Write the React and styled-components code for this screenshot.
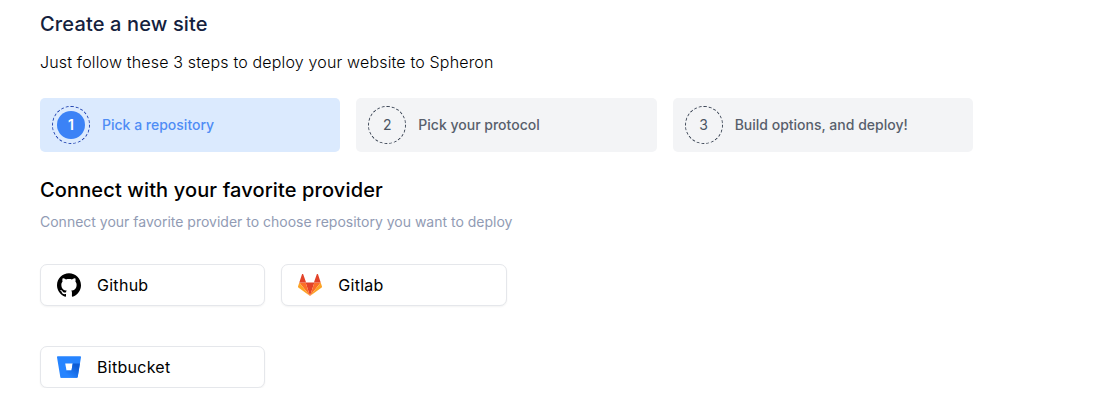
import React from "react";
import styled, { createGlobalStyle } from "styled-components";
import { SiGithub } from "react-icons/si";

const GlobalStyle = createGlobalStyle`
  * { box-sizing: border-box; }
  body { margin: 0; background: #fff; font-family: Inter, "Liberation Sans", sans-serif; }
  h1, h2, p { margin: 0; }
`;

const Page = styled.main`
  padding: 9px 0 0 40px;
`;

const Title = styled.h1`
  font-size: 20px;
  line-height: 30px;
  font-weight: 500;
  letter-spacing: 0.14px;
  color: #14213d;
`;

const Intro = styled.p`
  margin-top: 11px;
  font-size: 16px;
  line-height: 24px;
  font-weight: 300;
  letter-spacing: 0.165px;
  color: #000;
`;

const Steps = styled.ol`
  display: grid;
  grid-template-columns: repeat(3, 300.33px);
  gap: 16px;
  margin: 24px 0 0;
  padding: 0;
  list-style: none;
`;

const Step = styled.li`
  display: flex;
  align-items: center;
  gap: 12px;
  height: 54px;
  padding: 0 12px;
  border-radius: 5px;
  background: ${(p) => (p.$active ? "#dbeafe" : "#f3f4f6")};
  color: ${(p) => (p.$active ? "#4f8df5" : "#585f6c")};
  font-size: 14px;
  line-height: 20px;
  font-weight: 500;
`;

const Ring = styled.span`
  display: flex;
  width: 38px;
  height: 38px;
  padding: 4px;
  border: 1px dashed ${(p) => (p.$active ? "#1e40af" : "#374151")};
  border-radius: 50%;
`;

const StepNumber = styled.span`
  flex: 1;
  display: flex;
  align-items: center;
  justify-content: center;
  border-radius: 50%;
  background: ${(p) => (p.$active ? "#3b82f6" : "transparent")};
  color: ${(p) => (p.$active ? "#fff" : "#4b5563")};
  font-weight: ${(p) => (p.$active ? 600 : 400)};
`;

const Heading = styled.h2`
  margin-top: 23px;
  font-size: 20px;
  line-height: 30px;
  font-weight: 500;
  letter-spacing: 0.13px;
  color: #000;
`;

const Hint = styled.p`
  margin-top: 7px;
  font-size: 14px;
  line-height: 20px;
  color: #919bb4;
`;

const Providers = styled.div`
  display: grid;
  grid-template-columns: repeat(2, 225.3px);
  gap: 40px 16px;
  margin-top: 32px;
`;

const ProviderButton = styled.button`
  display: flex;
  align-items: center;
  gap: 16px;
  height: 42px;
  padding: 0 16px;
  border: 1px solid #e5e7eb;
  border-radius: 7px;
  background: #fff;
  box-shadow: 0 1px 2px rgba(0, 0, 0, 0.05);
  color: #000;
  font: 400 16px/24px Inter, "Liberation Sans", sans-serif;
  letter-spacing: 0.28px;
`;

const Icon = styled.svg`
  width: 24px;
  height: 24px;
`;

const GitlabLogo = () => (
  <Icon viewBox="0 0 24 24">
    <path d="M12 23 7.6 9.4h8.8z" fill="#e24329" />
    <path d="M12 23 7.6 9.4H1.3zM12 23l4.4-13.6h6.3z" fill="#fc6d26" />
    <path d="M1.3 9.4 0 13.5c-.1.4 0 .8.3 1L12 23zM22.7 9.4l1.3 4.1c.1.4 0 .8-.3 1L12 23z" fill="#fca326" />
    <path d="M1.3 9.4h6.8L5.2 1.3c-.2-.5-1-.5-1.2 0zM22.7 9.4h-6.8l2.9-8.1c.2-.5 1-.5 1.2 0z" fill="#e24329" />
  </Icon>
);

const BitbucketLogo = () => (
  <Icon viewBox="0 0 24 24">
    <defs>
      <linearGradient id="bucket" x1="1" y1="0.15" x2="0.35" y2="0.8">
        <stop offset=".18" stopColor="#0c5bd5" />
        <stop offset="1" stopColor="#2684ff" />
      </linearGradient>
    </defs>
    <path d="M.8 1.3a.8.8 0 0 0-.8.9l3.3 19.7c.1.5.5.9 1 .9h15.6c.4 0 .7-.3.8-.7L24 2.2a.8.8 0 0 0-.8-.9zM14.5 15.5h-5L8.2 8.5h7.5z" fill="#2684ff" />
    <path d="M22.9 8.5h-7.2l-1.2 7h-5l-5.9 7c.2.2.4.3.7.3h15.6c.4 0 .7-.3.8-.7z" fill="url(#bucket)" />
  </Icon>
);

const steps = ["Pick a repository", "Pick your protocol", "Build options, and deploy!"];
const providers = [
  { name: "Github", icon: <SiGithub size={24} /> },
  { name: "Gitlab", icon: <GitlabLogo /> },
  { name: "Bitbucket", icon: <BitbucketLogo /> },
];

export default function App() {
  return (
    <Page>
      <GlobalStyle />
      <Title>Create a new site</Title>
      <Intro>Just follow these 3 steps to deploy your website to Spheron</Intro>
      <Steps>
        {steps.map((label, i) => (
          <Step key={label} $active={i === 0}>
            <Ring $active={i === 0}>
              <StepNumber $active={i === 0}>{i + 1}</StepNumber>
            </Ring>
            <span>{label}</span>
          </Step>
        ))}
      </Steps>
      <Heading>Connect with your favorite provider</Heading>
      <Hint>Connect your favorite provider to choose repository you want to deploy</Hint>
      <Providers>
        {providers.map(({ name, icon }) => (
          <ProviderButton key={name}>
            {icon}
            {name}
          </ProviderButton>
        ))}
      </Providers>
    </Page>
  );
}
